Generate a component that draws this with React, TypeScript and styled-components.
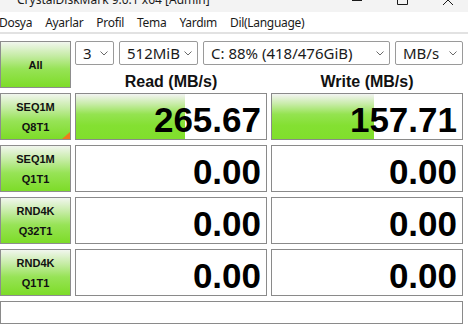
import styled, { createGlobalStyle } from "styled-components";

const GlobalStyle = createGlobalStyle`
  html, body {
    margin: 0;
    padding: 0;
    background: #ffffff;
  }
  body {
    width: 468px;
    height: 330px;
    overflow: hidden;
    font-family: "Noto Sans", "Liberation Sans", sans-serif;
    color: #000;
  }
`;

type Row = { top: string; bottom: string; read: string; write: string; readBar: number; writeBar: number; mark?: boolean };

const rows: Row[] = [
  { top: "SEQ1M", bottom: "Q8T1", read: "265.67", write: "157.71", readBar: 109, writeBar: 102, mark: true },
  { top: "SEQ1M", bottom: "Q1T1", read: "0.00", write: "0.00", readBar: 0, writeBar: 0 },
  { top: "RND4K", bottom: "Q32T1", read: "0.00", write: "0.00", readBar: 0, writeBar: 0 },
  { top: "RND4K", bottom: "Q1T1", read: "0.00", write: "0.00", readBar: 0, writeBar: 0 },
];

const menu = ["Dosya", "Ayarlar", "Profil", "Tema", "Yardım", "Dil(Language)"];

function Chevron() {
  return (
    <svg width="8" height="5" viewBox="0 0 8 5">
      <path d="M0.5 0.5 L4 4 L7.5 0.5" fill="none" stroke="#6a6a6a" strokeWidth="1" />
    </svg>
  );
}

export default function App() {
  return (
    <>
      <GlobalStyle />
      <Window>
        <TitleBar>
          <TitleText>CrystalDiskMark 9.0.1 x64 [Admin]</TitleText>
          <Controls>
            <svg width="102" height="6" viewBox="0 0 102 6">
              <rect x="0" y="0" width="10" height="1" fill="#1a1a1a" />
              <path d="M45.5 0 V4.5 H55.5 V0" fill="none" stroke="#1a1a1a" strokeWidth="1" />
              <path d="M91 5 L96 0 M101 5 L96 0" fill="none" stroke="#1a1a1a" strokeWidth="1" />
            </svg>
          </Controls>
        </TitleBar>
        <MenuBar>
          {menu.map((m) => (
            <MenuItem key={m}>{m}</MenuItem>
          ))}
        </MenuBar>
        <Separator />
        <Main>
          <AllButton>All</AllButton>
          <ComboRow>
            <Combo $w={39}>
              <span>3</span>
              <Chevron />
            </Combo>
            <Combo $w={79}>
              <span>512MiB</span>
              <Chevron />
            </Combo>
            <Combo $w={187}>
              <span>C: 88% (418/476GiB)</span>
              <Chevron />
            </Combo>
            <Combo $w={68}>
              <span>MB/s</span>
              <Chevron />
            </Combo>
          </ComboRow>
          <Header>Read (MB/s)</Header>
          <Header>Write (MB/s)</Header>

          {rows.map((r, i) => (
            <RowGroup key={i}>
              <TestButton $mark={r.mark}>
                <span>{r.top}</span>
                <span>{r.bottom}</span>
              </TestButton>
              <ValueCell>
                {r.readBar > 0 && <Bar style={{ width: r.readBar }} />}
                <Value>{r.read}</Value>
              </ValueCell>
              <ValueCell>
                {r.writeBar > 0 && <Bar style={{ width: r.writeBar }} />}
                <Value>{r.write}</Value>
              </ValueCell>
            </RowGroup>
          ))}

          <Comment />
        </Main>
      </Window>
    </>
  );
}

/* ========= styled-components ========== */

const Window = styled.div`
  display: flex;
  flex-direction: column;
  width: 468px;
  height: 330px;
  background: #ffffff;
`;

const TitleBar = styled.div`
  height: 12px;
  overflow: hidden;
  display: flex;
  justify-content: space-between;
  align-items: flex-start;
  background: #f3f3f3;
`;

const TitleText = styled.div`
  margin-left: 17px;
  font-size: 12px;
  line-height: 12px;
  color: #1a1a1a;
  white-space: nowrap;
  transform: translateY(-6px);
`;

const Controls = styled.div`
  display: flex;
  margin-right: 14px;
  height: 6px;
`;

const MenuBar = styled.div`
  height: 20px;
  display: flex;
  align-items: center;
  margin-left: -7.5px;
  background: #ffffff;
`;

const MenuItem = styled.div`
  padding: 0 6.5px;
  font-size: 12px;
  letter-spacing: -0.3px;
  color: #1a1a1a;
  white-space: nowrap;
`;

const Separator = styled.div`
  height: 2px;
  background: #e2e2e2;
`;

const Main = styled.div`
  padding-top: 7px;
  display: grid;
  grid-template-columns: 71px 192px 192px;
  grid-template-rows: 24px 18px repeat(4, 47px) 23px;
  column-gap: 4px;
  row-gap: 5px;
`;

const RowGroup = styled.div`
  display: contents;
`;

const greenButton = `
  box-sizing: border-box;
  border: 1px solid #8d8d8d;
  background: linear-gradient(to bottom, #f1f6ee 0%, #c6eca6 30%, #97e356 60%, #7ddc28 100%);
  font-family: "Liberation Sans", Arial, sans-serif;
  font-weight: 700;
  font-size: 11px;
  color: #111;
`;

const AllButton = styled.div`
  ${greenButton};
  grid-column: 1;
  grid-row: 1 / span 2;
  display: flex;
  align-items: center;
  justify-content: center;
`;

const ComboRow = styled.div`
  grid-column: 2 / span 2;
  grid-row: 1;
  display: flex;
  gap: 5px;
`;

const Combo = styled.div<{ $w: number }>`
  box-sizing: border-box;
  width: ${(p) => p.$w}px;
  height: 24px;
  padding: 0 5px 0 7px;
  display: flex;
  align-items: center;
  justify-content: space-between;
  border: 1px solid #9a9a9a;
  border-radius: 2px;
  background: #ffffff;
  font-size: 15px;
  color: #1a1a1a;
  white-space: nowrap;
`;

const Header = styled.div`
  grid-row: 2;
  display: flex;
  justify-content: center;
  padding-top: 3px;
  font-family: "Liberation Sans", Arial, sans-serif;
  font-weight: 700;
  font-size: 16px;
  line-height: 18px;
  color: #111;
`;

const TestButton = styled.div<{ $mark?: boolean }>`
  ${greenButton};
  position: relative;
  display: flex;
  flex-direction: column;
  align-items: center;
  justify-content: center;
  line-height: 20px;

  &::after {
    content: "";
    display: ${(p) => (p.$mark ? "block" : "none")};
    position: absolute;
    right: 0;
    bottom: 0;
    border-style: solid;
    border-width: 0 0 7px 8px;
    border-color: transparent transparent #f07a1e transparent;
  }
`;

const ValueCell = styled.div`
  position: relative;
  box-sizing: border-box;
  border: 1px solid #8a8a8a;
  background: #ffffff;
  display: flex;
  align-items: flex-end;
  justify-content: flex-end;
  padding: 0 5px 2px 0;
  overflow: hidden;
`;

const Bar = styled.div`
  position: absolute;
  left: 0;
  top: 0;
  bottom: 0;
  background: linear-gradient(to bottom, #f3f4f2 0%, #c8eca8 22%, #94e350 45%, #84e032 70%, #80df2c 100%);
`;

const Value = styled.div`
  position: relative;
  font-family: "Liberation Sans", Arial, sans-serif;
  font-weight: 700;
  font-size: 35px;
  line-height: 35px;
  color: #000;
`;

const Comment = styled.div`
  grid-column: 1 / span 3;
  box-sizing: border-box;
  border: 1px solid #8a8a8a;
  background: #ffffff;
`;
